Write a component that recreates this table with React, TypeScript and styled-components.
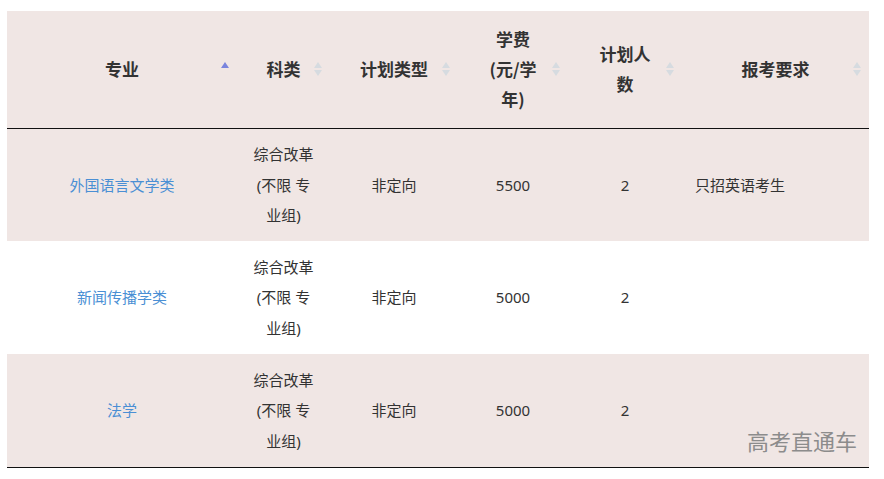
import React from "react";
import styled, { createGlobalStyle } from "styled-components";

const Global = createGlobalStyle`
  html, body { margin: 0; padding: 0; background: #fff; }
  body { font-family: "Noto Sans", "Noto Sans CJK SC", sans-serif; color: #333; }
`;

const Page = styled.div`
  position: relative;
  padding: 11px 15px 0 7px;
  width: 862px;
`;

const Table = styled.table`
  width: 862px;
  table-layout: fixed;
  border-collapse: collapse;
  border-bottom: 1px solid #111;
`;

const HeadRow = styled.tr`
  background: #f0e6e4;
  height: 117px;
  border-bottom: 1px solid #111;
`;

const Th = styled.th`
  position: relative;
  padding: 0 28px;
  font-size: 17px;
  font-weight: 700;
  line-height: 30px;
  color: #333;
  text-align: center;
  vertical-align: middle;
  font-family: "Noto Sans CJK SC", sans-serif;
`;

const SortBox = styled.span`
  position: absolute;
  right: 7px;
  top: 50%;
  margin-top: -8px;
  width: 10px;
  height: 16px;
  display: flex;
  flex-direction: column;
  align-items: center;
  justify-content: center;
  gap: 2px;
`;

const Tri = styled.span<{ $up?: boolean; $color: string }>`
  width: 0;
  height: 0;
  border-left: 4.5px solid transparent;
  border-right: 4.5px solid transparent;
  ${(p) =>
    p.$up
      ? `border-bottom: 6px solid ${p.$color};`
      : `border-top: 6px solid ${p.$color};`}
`;

const Row = styled.tr<{ $shade: boolean }>`
  background: ${(p) => (p.$shade ? "#f0e6e4" : "#ffffff")};
  height: 113px;
`;

const Td = styled.td<{ $left?: boolean }>`
  padding: 0 16px;
  font-size: 15px;
  line-height: 30.5px;
  color: #333;
  text-align: ${(p) => (p.$left ? "left" : "center")};
  vertical-align: middle;
  font-family: "Noto Sans", "Noto Sans CJK SC", sans-serif;
  padding-left: ${(p) => (p.$left ? "13px" : "16px")};
`;

const Link = styled.a`
  color: #4a8fd4;
  text-decoration: none;
  font-family: "Noto Sans CJK SC", sans-serif;
`;

const Watermark = styled.div`
  position: absolute;
  right: 27px;
  top: 424px;
  font-size: 22px;
  color: #8c8c8c;
  font-family: "Noto Sans CJK SC", sans-serif;
`;

const Sort = ({ active }: { active?: boolean }) => (
  <SortBox>
    <Tri $up $color={active ? "#7a84dd" : "#d6dbe0"} />
    <Tri $color={active ? "#f0e6e4" : "#d6dbe0"} />
  </SortBox>
);

const headers = ["专业", "科类", "计划类型", "学费(元/学年)", "计划人数", "报考要求"];
const widths = [230, 93, 128, 110, 114, 187];

const rows = [
  { major: "外国语言文学类", fee: "5500", req: "只招英语考生" },
  { major: "新闻传播学类", fee: "5000", req: "" },
  { major: "法学", fee: "5000", req: "" },
];

export default function App() {
  return (
    <Page>
      <Global />
      <Table>
        <colgroup>
          {widths.map((w, i) => (
            <col key={i} style={{ width: w }} />
          ))}
        </colgroup>
        <thead>
          <HeadRow>
            {headers.map((h, i) => (
              <Th key={h}>
                {h}
                <Sort active={i === 0} />
              </Th>
            ))}
          </HeadRow>
        </thead>
        <tbody>
          {rows.map((r, i) => (
            <Row key={r.major} $shade={i % 2 === 0}>
              <Td>
                <Link href="#">{r.major}</Link>
              </Td>
              <Td>综合改革(不限 专业组)</Td>
              <Td>非定向</Td>
              <Td>{r.fee}</Td>
              <Td>2</Td>
              <Td $left>{r.req}</Td>
            </Row>
          ))}
        </tbody>
      </Table>
      <Watermark>高考直通车</Watermark>
    </Page>
  );
}
